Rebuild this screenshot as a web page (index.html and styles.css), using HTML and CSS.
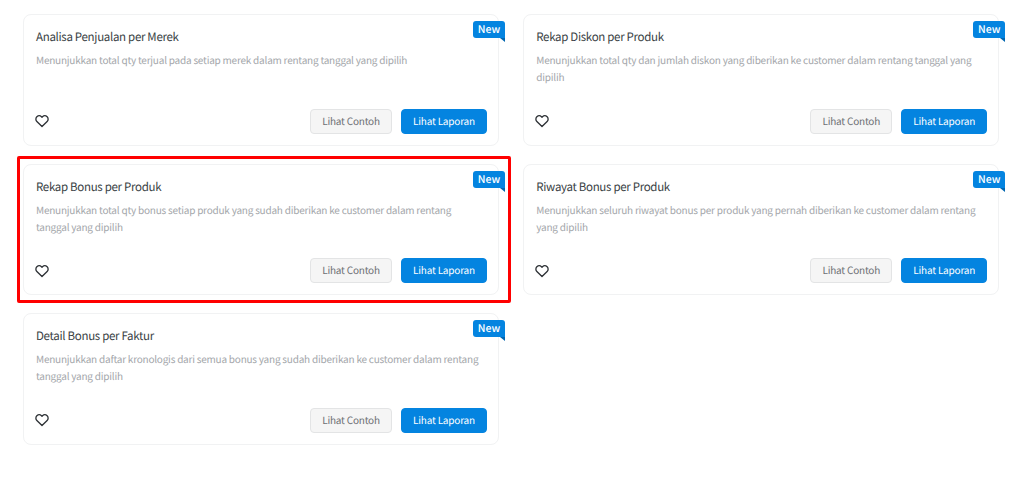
FILE: index.html
```html
<!DOCTYPE html>
<html lang="id">
<head>
<meta charset="utf-8">
<title>Laporan</title>
<link rel="stylesheet" href="styles.css">
</head>
<body>
<svg class="defs" width="0" height="0"><symbol id="heart" viewBox="0 0 24 24"><path d="M12 20.3 4.3 12.7a4.9 4.9 0 0 1 0-7 5 5 0 0 1 7 0l.7.7.7-.7a5 5 0 0 1 7 0 4.9 4.9 0 0 1 0 7z" fill="none" stroke="currentColor" stroke-width="2" stroke-linejoin="round"/></symbol></svg>
<main class="grid">
  <article class="card">
    <span class="badge">New</span>
    <h3 class="title">Analisa Penjualan per Merek</h3>
    <p class="desc">Menunjukkan total qty terjual pada setiap merek dalam rentang tanggal yang dipilih</p>
    <div class="foot"><svg class="heart"><use href="#heart"/></svg><div class="actions"><button class="btn ghost">Lihat Contoh</button><button class="btn primary">Lihat Laporan</button></div></div>
  </article>
  <article class="card">
    <span class="badge">New</span>
    <h3 class="title">Rekap Diskon per Produk</h3>
    <p class="desc">Menunjukkan total qty dan jumlah diskon yang diberikan ke customer dalam rentang tanggal yang dipilih</p>
    <div class="foot"><svg class="heart"><use href="#heart"/></svg><div class="actions"><button class="btn ghost">Lihat Contoh</button><button class="btn primary">Lihat Laporan</button></div></div>
  </article>
  <article class="card highlighted">
    <span class="badge">New</span>
    <h3 class="title">Rekap Bonus per Produk</h3>
    <p class="desc">Menunjukkan total qty bonus setiap produk yang sudah diberikan ke customer dalam rentang tanggal yang dipilih</p>
    <div class="foot"><svg class="heart"><use href="#heart"/></svg><div class="actions"><button class="btn ghost">Lihat Contoh</button><button class="btn primary">Lihat Laporan</button></div></div>
  </article>
  <article class="card">
    <span class="badge">New</span>
    <h3 class="title">Riwayat Bonus per Produk</h3>
    <p class="desc">Menunjukkan seluruh riwayat bonus per produk yang pernah diberikan ke customer dalam rentang yang dipilih</p>
    <div class="foot"><svg class="heart"><use href="#heart"/></svg><div class="actions"><button class="btn ghost">Lihat Contoh</button><button class="btn primary">Lihat Laporan</button></div></div>
  </article>
  <article class="card">
    <span class="badge">New</span>
    <h3 class="title">Detail Bonus per Faktur</h3>
    <p class="desc">Menunjukkan daftar kronologis dari semua bonus yang sudah diberikan ke customer dalam rentang tanggal yang dipilih</p>
    <div class="foot"><svg class="heart"><use href="#heart"/></svg><div class="actions"><button class="btn ghost">Lihat Contoh</button><button class="btn primary">Lihat Laporan</button></div></div>
  </article>
</main>
</body>
</html>
```
FILE: styles.css
```css
* { box-sizing: border-box; }
html, body { margin: 0; height: 100%; overflow: hidden; background: #fff; }
body { font-family: "Noto Sans CJK SC", "Noto Sans", sans-serif; color: #3a3f45; text-rendering: geometricPrecision; }
.defs { position: absolute; }
.grid {
  display: grid;
  grid-template-columns: 476px 476px;
  grid-auto-rows: 131.5px;
  column-gap: 24.25px;
  row-gap: 18px;
  padding: 14px 0 0 23px;
}
.card {
  position: relative;
  display: flex;
  flex-direction: column;
  padding: 12px 11px 11px 12px;
  background: #fff;
  border: 1px solid #f1f2f3;
  border-radius: 8px;
}
.highlighted::after {
  content: "";
  position: absolute;
  left: -7px;
  right: -13px;
  top: -9px;
  bottom: -9px;
  border: 3px solid #f00;
  border-radius: 2px;
  pointer-events: none;
}
.badge {
  position: absolute;
  top: 6px;
  right: -7px;
  width: 32px;
  height: 17px;
  border-radius: 3px 3px 0 3px;
  background: #0484e0;
  color: #fff;
  font-size: 10.5px;
  font-weight: 500;
  line-height: 17px;
  text-align: center;
}
.badge::after {
  content: "";
  position: absolute;
  right: 0;
  top: 17px;
  border-top: 4px solid #0166b0;
  border-left: 5px solid transparent;
}
.title { margin: 0; font-size: 11.5px; letter-spacing: -0.31px; font-weight: 400; line-height: 20px; color: #3a3f45; }
.desc { margin: 4px 0 0; max-width: 445px; font-size: 10px; letter-spacing: -0.22px; line-height: 17px; color: #a3a6aa; }
.foot { margin-top: auto; display: flex; align-items: center; justify-content: space-between; }
.heart { width: 16px; height: 16px; margin-left: -2px; color: #2d3135; }
.actions { display: flex; gap: 9px; }
.btn {
  height: 25px;
  padding: 0 0 1px;
  border-radius: 4px;
  font: 400 10px/22px "Noto Sans CJK SC", "Noto Sans", sans-serif;
  letter-spacing: -0.2px;
  text-rendering: geometricPrecision;
}
.ghost { width: 82px; background: #f5f5f5; border: 1px solid #e3e4e5; color: #6d7074; }
.primary { width: 86px; background: #0484e0; border: 1px solid #0484e0; color: #fff; }
```
